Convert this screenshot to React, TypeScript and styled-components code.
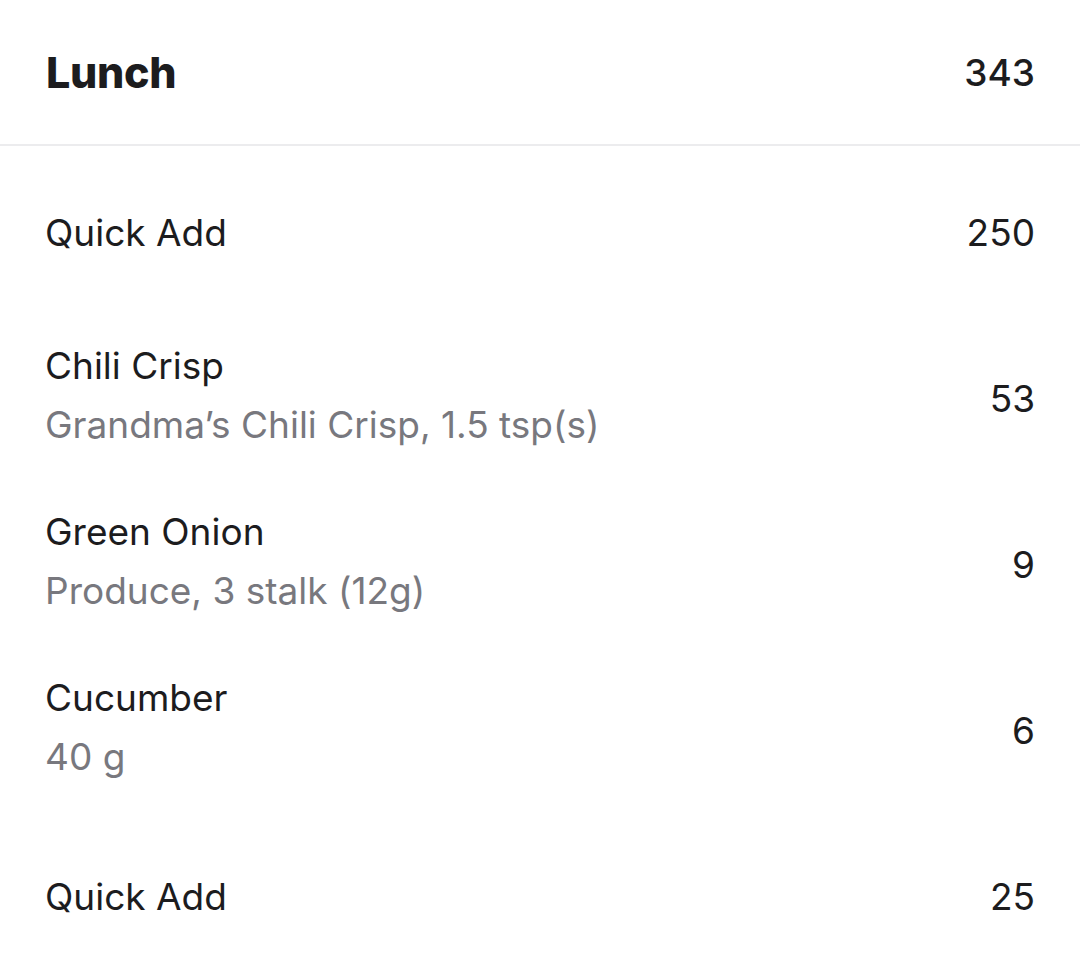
import styled, { createGlobalStyle } from "styled-components"

const GlobalStyle = createGlobalStyle`
  html, body {
    margin: 0;
    padding: 0;
    background: #ffffff;
  }
  body {
    font-family: Inter, "Noto Sans", "Liberation Sans", sans-serif;
    -webkit-font-smoothing: antialiased;
  }
`

type Entry = {
  name: string
  detail?: string
  calories: number
}

const entries: Entry[] = [
  { name: "Quick Add", calories: 250 },
  { name: "Chili Crisp", detail: "Grandma’s Chili Crisp, 1.5 tsp(s)", calories: 53 },
  { name: "Green Onion", detail: "Produce, 3 stalk (12g)", calories: 9 },
  { name: "Cucumber", detail: "40 g", calories: 6 },
  { name: "Quick Add", calories: 25 },
]

function App() {
  const total = entries.reduce((sum, e) => sum + e.calories, 0)

  return (
    <>
      <GlobalStyle />
      <Page>
        <MealHeader>
          <MealTitle>Lunch</MealTitle>
          <MealTotal>{total}</MealTotal>
        </MealHeader>
        <EntryList>
          {entries.map((entry, i) => (
            <EntryRow key={i}>
              <EntryText $twoLine={!!entry.detail}>
                <EntryName>{entry.name}</EntryName>
                {entry.detail && <EntryDetail>{entry.detail}</EntryDetail>}
              </EntryText>
              <EntryCalories>{entry.calories}</EntryCalories>
            </EntryRow>
          ))}
        </EntryList>
      </Page>
    </>
  )
}

const Page = styled.div`
  width: 1080px;
  height: 977px;
  overflow: hidden;
  background: #ffffff;
  color: #1d1d1f;
`

const MealHeader = styled.div`
  display: flex;
  justify-content: space-between;
  align-items: center;
  height: 146px;
  padding: 0 45px 0 46px;
  border-bottom: solid 2px #ececee;
  box-sizing: border-box;
`

const MealTitle = styled.div`
  font-size: 43px;
  font-weight: 800;
  letter-spacing: -0.3px;
  color: #1c1c1e;
`

const MealTotal = styled.div`
  font-size: 37px;
  font-weight: 500;
  color: #1c1c1e;
`

const EntryList = styled.div`
  display: flex;
  flex-direction: column;
  padding-top: 3px;
`

const EntryRow = styled.div`
  display: flex;
  justify-content: space-between;
  align-items: center;
  height: 166px;
  padding: 0 45px;
`

const EntryText = styled.div<{ $twoLine: boolean }>`
  display: flex;
  flex-direction: column;
  padding-bottom: ${({ $twoLine }) => ($twoLine ? "7px" : "0")};
`

const EntryName = styled.div`
  font-size: 37px;
  line-height: 59px;
  color: #1c1c1e;
`

const EntryDetail = styled.div`
  font-size: 37px;
  line-height: 59px;
  color: #78787e;
`

const EntryCalories = styled.div`
  font-size: 37px;
  color: #1c1c1e;
`

export default App
